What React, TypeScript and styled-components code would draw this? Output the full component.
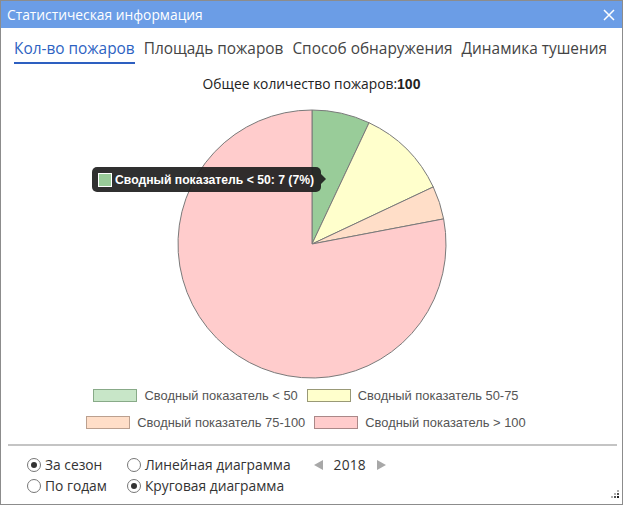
import React from "react";
import styled, { createGlobalStyle } from "styled-components";

const GlobalStyle = createGlobalStyle`
  html, body {
    margin: 0;
    padding: 0;
    background: #ffffff;
  }
  * {
    box-sizing: border-box;
  }
`;

const slices = [
  { label: "Сводный показатель < 50", value: 7, fill: "#99cc99", swatch: "#c8e6c8", border: "#88aa88" },
  { label: "Сводный показатель 50-75", value: 11, fill: "#ffffcc", swatch: "#ffffcc", border: "#999977" },
  { label: "Сводный показатель 75-100", value: 4, fill: "#ffdec8", swatch: "#ffdec8", border: "#bba08f" },
  { label: "Сводный показатель > 100", value: 78, fill: "#ffcccc", swatch: "#ffcccc", border: "#aa8888" },
];

const CX = 136;
const CY = 136;
const R = 134;

const point = (frac: number) => {
  const a = frac * Math.PI * 2;
  return [CX + R * Math.sin(a), CY - R * Math.cos(a)];
};

const PieChart = () => {
  const total = slices.reduce((s, x) => s + x.value, 0);
  let acc = 0;
  return (
    <svg width={272} height={272} viewBox="0 0 272 272">
      {slices.map((s) => {
        const start = acc / total;
        acc += s.value;
        const end = acc / total;
        const [x1, y1] = point(start);
        const [x2, y2] = point(end);
        const large = end - start > 0.5 ? 1 : 0;
        return (
          <path
            key={s.label}
            d={`M${CX},${CY} L${x1},${y1} A${R},${R} 0 ${large} 1 ${x2},${y2} Z`}
            fill={s.fill}
            stroke="#7a7a7a"
            strokeWidth={1}
          />
        );
      })}
    </svg>
  );
};

const App = () => {
  return (
    <>
      <GlobalStyle />
      <Window>
        <TitleBar>
          <TitleText>Статистическая информация</TitleText>
          <CloseButton>
            <svg width="12" height="12" viewBox="0 0 12 12">
              <path d="M1 1 L11 11 M11 1 L1 11" stroke="#ffffff" strokeWidth="1.5" />
            </svg>
          </CloseButton>
        </TitleBar>
        <Body>
          <Tabs>
            <Tab $active>Кол-во пожаров</Tab>
            <Tab>Площадь пожаров</Tab>
            <Tab>Способ обнаружения</Tab>
            <Tab>Динамика тушения</Tab>
          </Tabs>
          <ChartArea>
            <Heading>
              Общее количество пожаров:<Bold>100</Bold>
            </Heading>
            <PieBox>
              <PieChart />
            </PieBox>
            <Tooltip>
              <TipSwatch />
              Сводный показатель &lt; 50: 7 (7%)
            </Tooltip>
            <Legend>
              {slices.map((s) => (
                <LegendItem key={s.label}>
                  <LegendSwatch $fill={s.swatch} $border={s.border} />
                  {s.label}
                </LegendItem>
              ))}
            </Legend>
          </ChartArea>
          <Separator />
          <Controls>
            <RadioColumn>
              <Radio>
                <RadioCircle $checked />
                За сезон
              </Radio>
              <Radio>
                <RadioCircle />
                По годам
              </Radio>
            </RadioColumn>
            <RadioColumn>
              <Radio>
                <RadioCircle />
                Линейная диаграмма
              </Radio>
              <Radio>
                <RadioCircle $checked />
                Круговая диаграмма
              </Radio>
            </RadioColumn>
            <YearPicker>
              <svg width="9" height="10" viewBox="0 0 9 10">
                <path d="M0 5 L9 0 L9 10 Z" fill="#a8a8a8" />
              </svg>
              <Year>2018</Year>
              <svg width="9" height="10" viewBox="0 0 9 10">
                <path d="M9 5 L0 0 L0 10 Z" fill="#a8a8a8" />
              </svg>
            </YearPicker>
          </Controls>
          <Grip>
            <svg width="8" height="9" viewBox="0 0 8 9">
              <rect x="6" y="0" width="2" height="2" fill="#b0b0b0" />
              <rect x="3" y="3" width="2" height="2" fill="#b0b0b0" />
              <rect x="6" y="3" width="2" height="2" fill="#555" />
              <rect x="0" y="6" width="2" height="2" fill="#b0b0b0" />
              <rect x="3" y="6" width="2" height="2" fill="#555" />
              <rect x="6" y="6" width="2" height="2" fill="#222" />
            </svg>
          </Grip>
        </Body>
      </Window>
    </>
  );
};

export default App;

const Window = styled.div`
  position: relative;
  width: 623px;
  height: 505px;
  border: 1px solid #8c8c8c;
  display: flex;
  flex-direction: column;
  background: #ffffff;
  overflow: hidden;
`;

const TitleBar = styled.div`
  height: 27px;
  flex: none;
  background: #6b9de6;
  display: flex;
  align-items: center;
  justify-content: space-between;
  padding: 0 7px 0 6px;
`;

const TitleText = styled.span`
  font-family: "Open Sans", sans-serif;
  font-size: 13.8px;
  color: #ffffff;
`;

const CloseButton = styled.span`
  display: flex;
  align-items: center;
`;

const Body = styled.div`
  position: relative;
  flex: 1;
  display: flex;
  flex-direction: column;
`;

const Tabs = styled.div`
  display: flex;
  gap: 9px;
  padding: 10px 0 0 13px;
`;

const Tab = styled.div<{ $active?: boolean }>`
  font-family: "Open Sans", sans-serif;
  font-size: 15.4px;
  line-height: 22px;
  padding-bottom: 2px;
  color: ${(p) => (p.$active ? "#2d62c2" : "#444444")};
  border-bottom: 2px solid ${(p) => (p.$active ? "#2d5fc0" : "transparent")};
`;

const ChartArea = styled.div`
  position: relative;
  display: flex;
  flex-direction: column;
  align-items: center;
`;

const Heading = styled.div`
  margin-top: 11px;
  font-family: "Open Sans", sans-serif;
  font-size: 13.8px;
  line-height: 18px;
  color: #222222;
`;

const Bold = styled.span`
  font-family: "Liberation Sans", Arial, sans-serif;
  font-weight: bold;
  font-size: 14px;
`;

const PieBox = styled.div`
  margin-top: 15px;
  width: 272px;
  height: 272px;
  display: flex;
`;

const Tooltip = styled.div`
  position: absolute;
  left: 91px;
  top: 103px;
  height: 25px;
  display: flex;
  align-items: center;
  gap: 3px;
  padding: 0 7px 0 6px;
  border-radius: 5px;
  background: rgba(30, 30, 30, 0.92);
  color: #ffffff;
  font-family: "Liberation Sans", Arial, sans-serif;
  font-size: 12.2px;
  font-weight: bold;
  white-space: nowrap;

  &::after {
    content: "";
    position: absolute;
    right: -5px;
    top: 7px;
    border-top: 5px solid transparent;
    border-bottom: 5px solid transparent;
    border-left: 5px solid rgba(30, 30, 30, 0.92);
  }
`;

const TipSwatch = styled.span`
  width: 14px;
  height: 14px;
  background: #99cc99;
  border: 1px solid #ffffff;
`;

const Legend = styled.div`
  margin: 8px 11px 0 0;
  width: 480px;
  display: flex;
  flex-wrap: wrap;
  justify-content: center;
  column-gap: 9px;
  row-gap: 12px;
`;

const LegendItem = styled.div`
  display: flex;
  align-items: center;
  gap: 7px;
  font-family: "Liberation Sans", Arial, sans-serif;
  font-size: 12.9px;
  line-height: 15px;
  color: #555555;
`;

const LegendSwatch = styled.span<{ $fill: string; $border: string }>`
  width: 44px;
  height: 13px;
  background: ${(p) => p.$fill};
  border: 1px solid ${(p) => p.$border};
`;

const Separator = styled.div`
  margin: 14px 5px 0 7px;
  height: 2px;
  background: #c4c4c4;
`;

const Controls = styled.div`
  display: flex;
  align-items: flex-start;
  gap: 20px;
  padding: 9px 0 0 26px;
`;

const RadioColumn = styled.div`
  display: flex;
  flex-direction: column;
  gap: 2px;
`;

const Radio = styled.label`
  display: flex;
  align-items: center;
  gap: 4px;
  font-family: "Open Sans", sans-serif;
  font-size: 13.8px;
  line-height: 19px;
  color: #333333;
`;

const RadioCircle = styled.span<{ $checked?: boolean }>`
  width: 14px;
  height: 14px;
  border-radius: 50%;
  border: 1px solid #777777;
  display: flex;
  align-items: center;
  justify-content: center;

  &::after {
    content: "";
    width: 6px;
    height: 6px;
    border-radius: 50%;
    background: ${(p) => (p.$checked ? "#333333" : "transparent")};
  }
`;

const YearPicker = styled.div`
  display: flex;
  align-items: center;
  gap: 11px;
  margin-left: 3px;
  height: 19px;
  font-family: "Open Sans", sans-serif;
  font-size: 13.8px;
  color: #333333;
`;

const Year = styled.span`
  letter-spacing: 0.2px;
`;

const Grip = styled.div`
  position: absolute;
  right: 3px;
  bottom: 5px;
  display: flex;
`;
